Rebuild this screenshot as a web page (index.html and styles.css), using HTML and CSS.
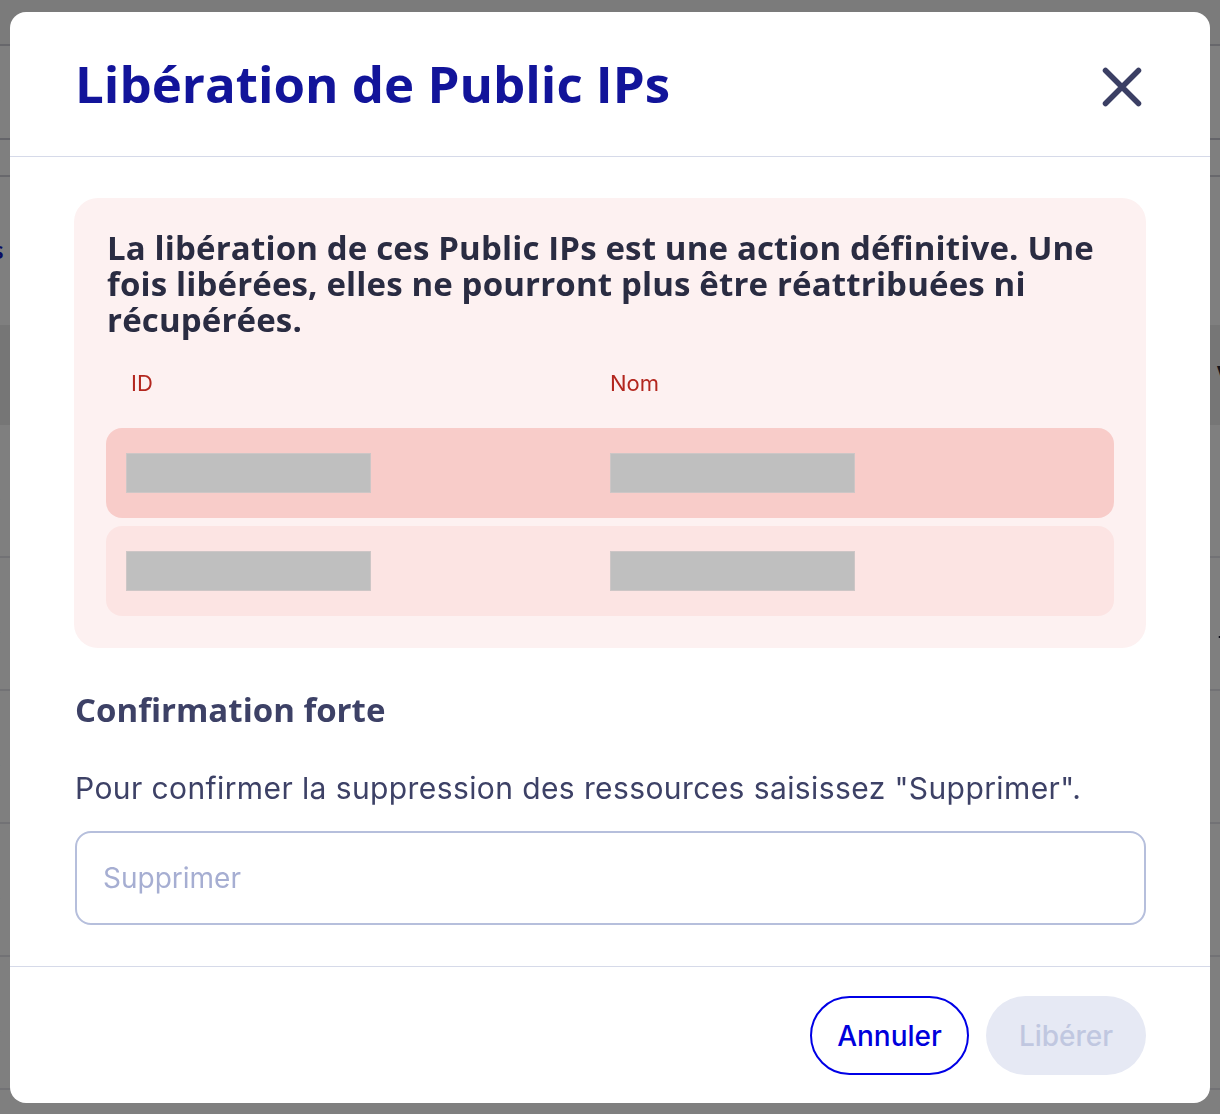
FILE: index.html
```html
<!DOCTYPE html>
<html lang="fr">
<head>
<meta charset="utf-8">
<title>Libération de Public IPs</title>
<link rel="stylesheet" href="styles.css">
</head>
<body>
<div class="page">
  <div class="bg-top"></div>
  <div class="bg-search"><span class="bg-c">c</span></div>
  <div class="bg-tabs"></div>
  <div class="bg-link"><span class="bg-s">s</span></div>
  <div class="bg-head"><span class="bg-v">V</span></div>
  <div class="bg-row"><span class="bg-c">c</span></div>
  <div class="bg-row"><span class="bg-c">c</span><span class="bg-i">i</span></div>
  <div class="bg-row"><span class="bg-c">c</span></div>
  <div class="bg-row"><span class="bg-c">c</span></div>
  <div class="bg-row"><span class="bg-c">c</span></div>
</div>
<div class="overlay"></div>
<div class="modal" role="dialog">
  <header class="modal-header">
    <h1 class="modal-title">Libération de Public IPs</h1>
    <button class="close-btn" aria-label="Fermer">
      <svg width="40" height="40" viewBox="0 0 40 40"><path d="M3.5 3.5 L36.5 36.5 M36.5 3.5 L3.5 36.5" stroke="#3b3f64" stroke-width="5.5" stroke-linecap="round" fill="none"/></svg>
    </button>
  </header>
  <section class="modal-body">
    <div class="alert">
      <p class="alert-text">La libération de ces Public IPs est une action définitive. Une fois libérées, elles ne pourront plus être réattribuées ni récupérées.</p>
      <div class="thead">
        <span>ID</span>
        <span>Nom</span>
      </div>
      <div class="trow trow-first">
        <span class="redacted"></span>
        <span class="redacted"></span>
      </div>
      <div class="trow">
        <span class="redacted"></span>
        <span class="redacted"></span>
      </div>
    </div>
    <h2 class="confirm-title">Confirmation forte</h2>
    <p class="confirm-text">Pour confirmer la suppression des ressources saisissez "Supprimer".</p>
    <input class="confirm-input" type="text" placeholder="Supprimer">
  </section>
  <footer class="modal-footer">
    <button class="btn btn-outline">Annuler</button>
    <button class="btn btn-disabled" disabled>Libérer</button>
  </footer>
</div>
</body>
</html>
```
FILE: styles.css
```css
* { box-sizing: border-box; }
html, body { margin: 0; padding: 0; }
body {
  width: 1220px;
  height: 1114px;
  overflow: hidden;
  background: #ffffff;
  font-family: Inter, "Liberation Sans", sans-serif;
}

/* backdrop page */
.page { width: 1220px; }
.bg-top { height: 46px; background: #f6f6f6; border-bottom: 2px solid #cfcfd6; }
.bg-search { height: 94px; border-bottom: 2px solid #c8c8d2; display: flex; align-items: center; }
.bg-c { margin-left: -12px; font-size: 26px; color: #000; font-family: "Open Sans", sans-serif; }
.bg-search .bg-c { color: #7c8099; }
.bg-tabs { height: 37px; border-bottom: 2px solid #d0d0d8; }
.bg-link { height: 148px; display: flex; align-items: flex-start; padding-top: 56px; }
.bg-s { margin-left: -8px; font-size: 24px; font-weight: 600; color: #1016c8; font-family: "Open Sans", sans-serif; }
.bg-head { height: 100px; background: #ececec; display: flex; align-items: center; justify-content: flex-end; }
.bg-v { margin-right: -14px; font-size: 26px; font-weight: 700; color: #2a2a3a; font-family: "Open Sans", sans-serif; }
.bg-row { height: 133px; border-bottom: 2px solid #e4e4ea; display: flex; align-items: center; justify-content: space-between; }
.bg-i { margin-right: -6px; font-size: 26px; font-weight: 600; color: #1a1a2e; text-decoration: underline; font-family: "Open Sans", sans-serif; }

.overlay {
  position: fixed;
  inset: 0;
  background: rgba(0, 0, 0, 0.5);
}

/* modal */
.modal {
  position: fixed;
  top: 12px;
  left: 10px;
  width: 1200px;
  background: #ffffff;
  border-radius: 16px;
  display: flex;
  flex-direction: column;
  overflow: hidden;
}

.modal-header {
  height: 145px;
  border-bottom: 1px solid #d6dae9;
  display: flex;
  align-items: center;
  justify-content: space-between;
  padding: 0 68px 0 65px;
}
.modal-title {
  margin: 0;
  font-family: "Open Sans", sans-serif;
  font-weight: 700;
  font-size: 51px;
  line-height: 56px;
  color: #12149a;
  padding-bottom: 2px;
}
.close-btn {
  border: 0;
  background: none;
  padding: 0;
  width: 40px;
  height: 40px;
  margin-top: 6px;
  display: flex;
}

.modal-body {
  padding: 41px 64px 41px 64px;
  display: flex;
  flex-direction: column;
}

.alert {
  background: #fdf1f1;
  border-radius: 24px;
  padding: 32px 32px 32px 32px;
  display: flex;
  flex-direction: column;
}
.alert-text {
  margin: 0;
  padding-left: 1px;
  font-family: "Open Sans", sans-serif;
  font-weight: 700;
  font-size: 33px;
  line-height: 36px;
  letter-spacing: 0.15px;
  color: #2a2c42;
}
.thead {
  height: 90px;
  display: grid;
  grid-template-columns: 1fr 1fr;
  align-items: center;
  padding: 0 25px;
  font-size: 22px;
  color: #b3261e;
}
.trow {
  height: 90px;
  display: grid;
  grid-template-columns: 1fr 1fr;
  align-items: center;
  padding: 0 20px;
  border-radius: 16px;
  background: #fce4e3;
}
.trow-first {
  background: #f8ccc9;
  margin-bottom: 8px;
}
.redacted {
  display: block;
  width: 245px;
  height: 40px;
  background: #bfbfbf;
  border: 1px solid #cdc6c6;
}

.confirm-title {
  margin: 44px 0 0 1px;
  font-family: "Open Sans", sans-serif;
  font-weight: 700;
  font-size: 33px;
  line-height: 36px;
  color: #3d4166;
}
.confirm-text {
  margin: 42px 0 0 1px;
  font-size: 30px;
  line-height: 36px;
  letter-spacing: 0.4px;
  color: #3d4166;
}
.confirm-input {
  margin: 25px 0 0 1px;
  height: 94px;
  width: 1071px;
  border: 2px solid #b6bfdc;
  border-radius: 16px;
  padding: 0 26px;
  font-family: Inter, sans-serif;
  font-size: 28px;
  color: #3d4166;
  background: #fff;
  outline: none;
}
.confirm-input::placeholder { color: #a6aed2; }

.modal-footer {
  border-top: 1px solid #d6dae9;
  padding: 29px 64px 28px;
  display: flex;
  justify-content: flex-end;
  gap: 17px;
}
.btn {
  height: 79px;
  width: 160px;
  border-radius: 40px;
  font-family: Inter, sans-serif;
  font-size: 28px;
  font-weight: 500;
  padding: 0;
}
.btn-outline {
  width: 159px;
  border: 2px solid #0000e6;
  background: #fff;
  color: #0000dc;
}
.btn-disabled {
  border: 0;
  background: #e6e9f4;
  color: #c0c7e0;
}
```
